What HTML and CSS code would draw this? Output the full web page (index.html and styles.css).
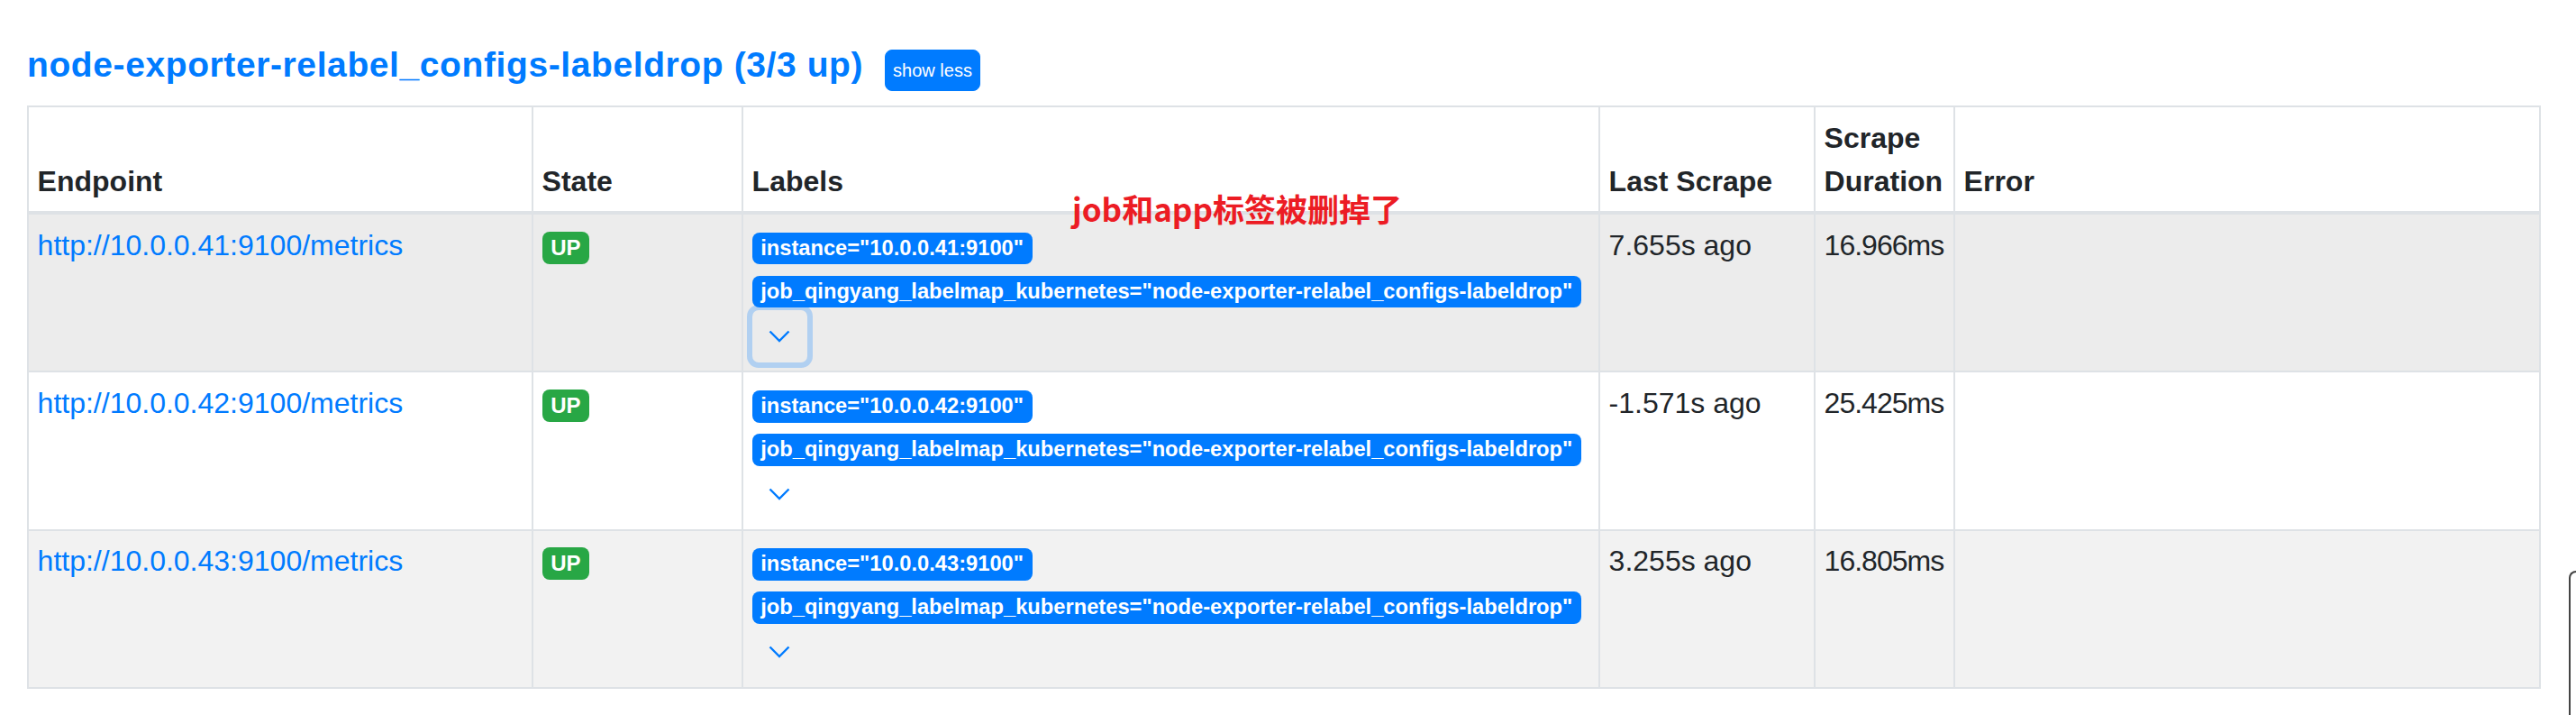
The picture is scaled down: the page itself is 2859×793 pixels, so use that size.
FILE: index.html
```html
<!DOCTYPE html>
<html lang="zh-CN">
<head>
    <meta charset="UTF-8">
    <meta name="viewport" content="width=device-width, initial-scale=1.0">
    <title>Targets</title>
    <link rel="stylesheet" href="styles.css">
</head>
<body>

<div class="container">
    <h3 class="pool-title"><a href="#">node-exporter-relabel_configs-labeldrop (3/3 up)</a><button class="btn-xs">show less</button></h3>

    <div class="table-box">
        <table class="targets">
            <colgroup>
                <col class="col-endpoint">
                <col class="col-state">
                <col class="col-labels">
                <col class="col-last">
                <col class="col-duration">
                <col>
            </colgroup>
            <thead>
                <tr>
                    <th>Endpoint</th>
                    <th>State</th>
                    <th>Labels</th>
                    <th>Last Scrape</th>
                    <th>Scrape Duration</th>
                    <th>Error</th>
                </tr>
            </thead>
            <tbody>
                <tr class="hover">
                    <td><a href="#">http://10.0.0.41:9100/metrics</a></td>
                    <td><span class="badge badge-up">UP</span></td>
                    <td>
                        <div class="labels">
                            <span class="badge badge-label">instance="10.0.0.41:9100"</span>
                            <span class="badge badge-label">job_qingyang_labelmap_kubernetes="node-exporter-relabel_configs-labeldrop"</span>
                        </div>
                        <button class="btn-more focus"><svg width="24" height="14" viewBox="0 0 24 14"><polyline points="1.5,1.5 12,12 22.5,1.5"/></svg></button>
                    </td>
                    <td>7.655s ago</td>
                    <td class="duration">16.966ms</td>
                    <td></td>
                </tr>
                <tr>
                    <td><a href="#">http://10.0.0.42:9100/metrics</a></td>
                    <td><span class="badge badge-up">UP</span></td>
                    <td>
                        <div class="labels">
                            <span class="badge badge-label">instance="10.0.0.42:9100"</span>
                            <span class="badge badge-label">job_qingyang_labelmap_kubernetes="node-exporter-relabel_configs-labeldrop"</span>
                        </div>
                        <button class="btn-more"><svg width="24" height="14" viewBox="0 0 24 14"><polyline points="1.5,1.5 12,12 22.5,1.5"/></svg></button>
                    </td>
                    <td>-1.571s ago</td>
                    <td class="duration">25.425ms</td>
                    <td></td>
                </tr>
                <tr class="odd">
                    <td><a href="#">http://10.0.0.43:9100/metrics</a></td>
                    <td><span class="badge badge-up">UP</span></td>
                    <td>
                        <div class="labels">
                            <span class="badge badge-label">instance="10.0.0.43:9100"</span>
                            <span class="badge badge-label">job_qingyang_labelmap_kubernetes="node-exporter-relabel_configs-labeldrop"</span>
                        </div>
                        <button class="btn-more"><svg width="24" height="14" viewBox="0 0 24 14"><polyline points="1.5,1.5 12,12 22.5,1.5"/></svg></button>
                    </td>
                    <td>3.255s ago</td>
                    <td class="duration">16.805ms</td>
                    <td></td>
                </tr>
            </tbody>
        </table>

        <!-- red note written over the labels column -->
        <span class="note">job和app标签被删掉了</span>
    </div>
</div>

<div class="scroll-thumb"></div>

</body>
</html>
```

FILE: styles.css
```css
body {
    font-family: "Liberation Sans", Arial, sans-serif;
    font-size: 32px;
    line-height: 1.5;
    color: #212529;
    background-color: #fff;
    margin: 0;
    padding: 0;
}
a {
    color: #007bff;
    text-decoration: none;
}
.container {
    padding: 49px 39px 0 30px;
}
.pool-title {
    font-size: 39px;
    font-weight: bold;
    line-height: 1.2;
    letter-spacing: 0.6px;
    margin: 0 0 16px 0;
}
.btn-xs {
    font-family: "Liberation Sans", Arial, sans-serif;
    font-size: 20px;
    line-height: 36px;
    letter-spacing: 0;
    padding: 4px 8px;
    margin-left: 24px;
    border: 1px solid #007bff;
    border-radius: 8px;
    background-color: #007bff;
    color: #fff;
    vertical-align: baseline;
    cursor: pointer;
}
.table-box {
    position: relative;
}
.targets {
    width: 100%;
    table-layout: fixed;
    border-collapse: collapse;
}
.col-endpoint { width: 560px; }
.col-state { width: 233px; }
.col-labels { width: 951px; }
.col-last { width: 239px; }
.col-duration { width: 155px; }
.targets th, .targets td {
    border: 2px solid #dee2e6;
    padding: 9.6px;
    text-align: left;
}
.targets th {
    vertical-align: bottom;
    border-bottom-width: 4px;
    font-weight: bold;
}
.targets td {
    vertical-align: top;
}
.targets tr.hover td {
    background-color: #ececec;
}
.targets tr.odd td {
    background-color: #f2f2f2;
}
.duration {
    letter-spacing: -1px;
    white-space: nowrap;
}
.badge {
    display: inline-block;
    font-size: 24px;
    font-weight: bold;
    line-height: 1;
    padding: 6px 9.6px;
    border-radius: 8px;
    color: #fff;
    white-space: nowrap;
    vertical-align: baseline;
}
.badge-up {
    background-color: #28a745;
}
.badge-label {
    background-color: #007bff;
}
.labels .badge {
    font-size: 23.7px;
}
.btn-more {
    display: block;
    width: 61px;
    height: 58px;
    padding: 0;
    border: 2px solid transparent;
    border-radius: 7px;
    background: none;
    cursor: pointer;
}
.btn-more svg {
    display: block;
    margin: 0 auto;
    fill: none;
    stroke: #007bff;
    stroke-width: 2.4;
}
.btn-more.focus {
    box-shadow: 0 0 0 6px rgba(0, 123, 255, 0.25);
}
.note {
    position: absolute;
    left: 1160px;
    top: 96px;
    font-family: "Noto Sans CJK SC", sans-serif;
    font-size: 35px;
    font-weight: bold;
    line-height: 1;
    color: #ec1c24;
    white-space: nowrap;
}
.scroll-thumb {
    position: fixed;
    right: 0;
    top: 633px;
    width: 6px;
    height: 170px;
    border-left: 2px solid #444;
    border-top: 2px solid #444;
    border-top-left-radius: 8px;
}
```
